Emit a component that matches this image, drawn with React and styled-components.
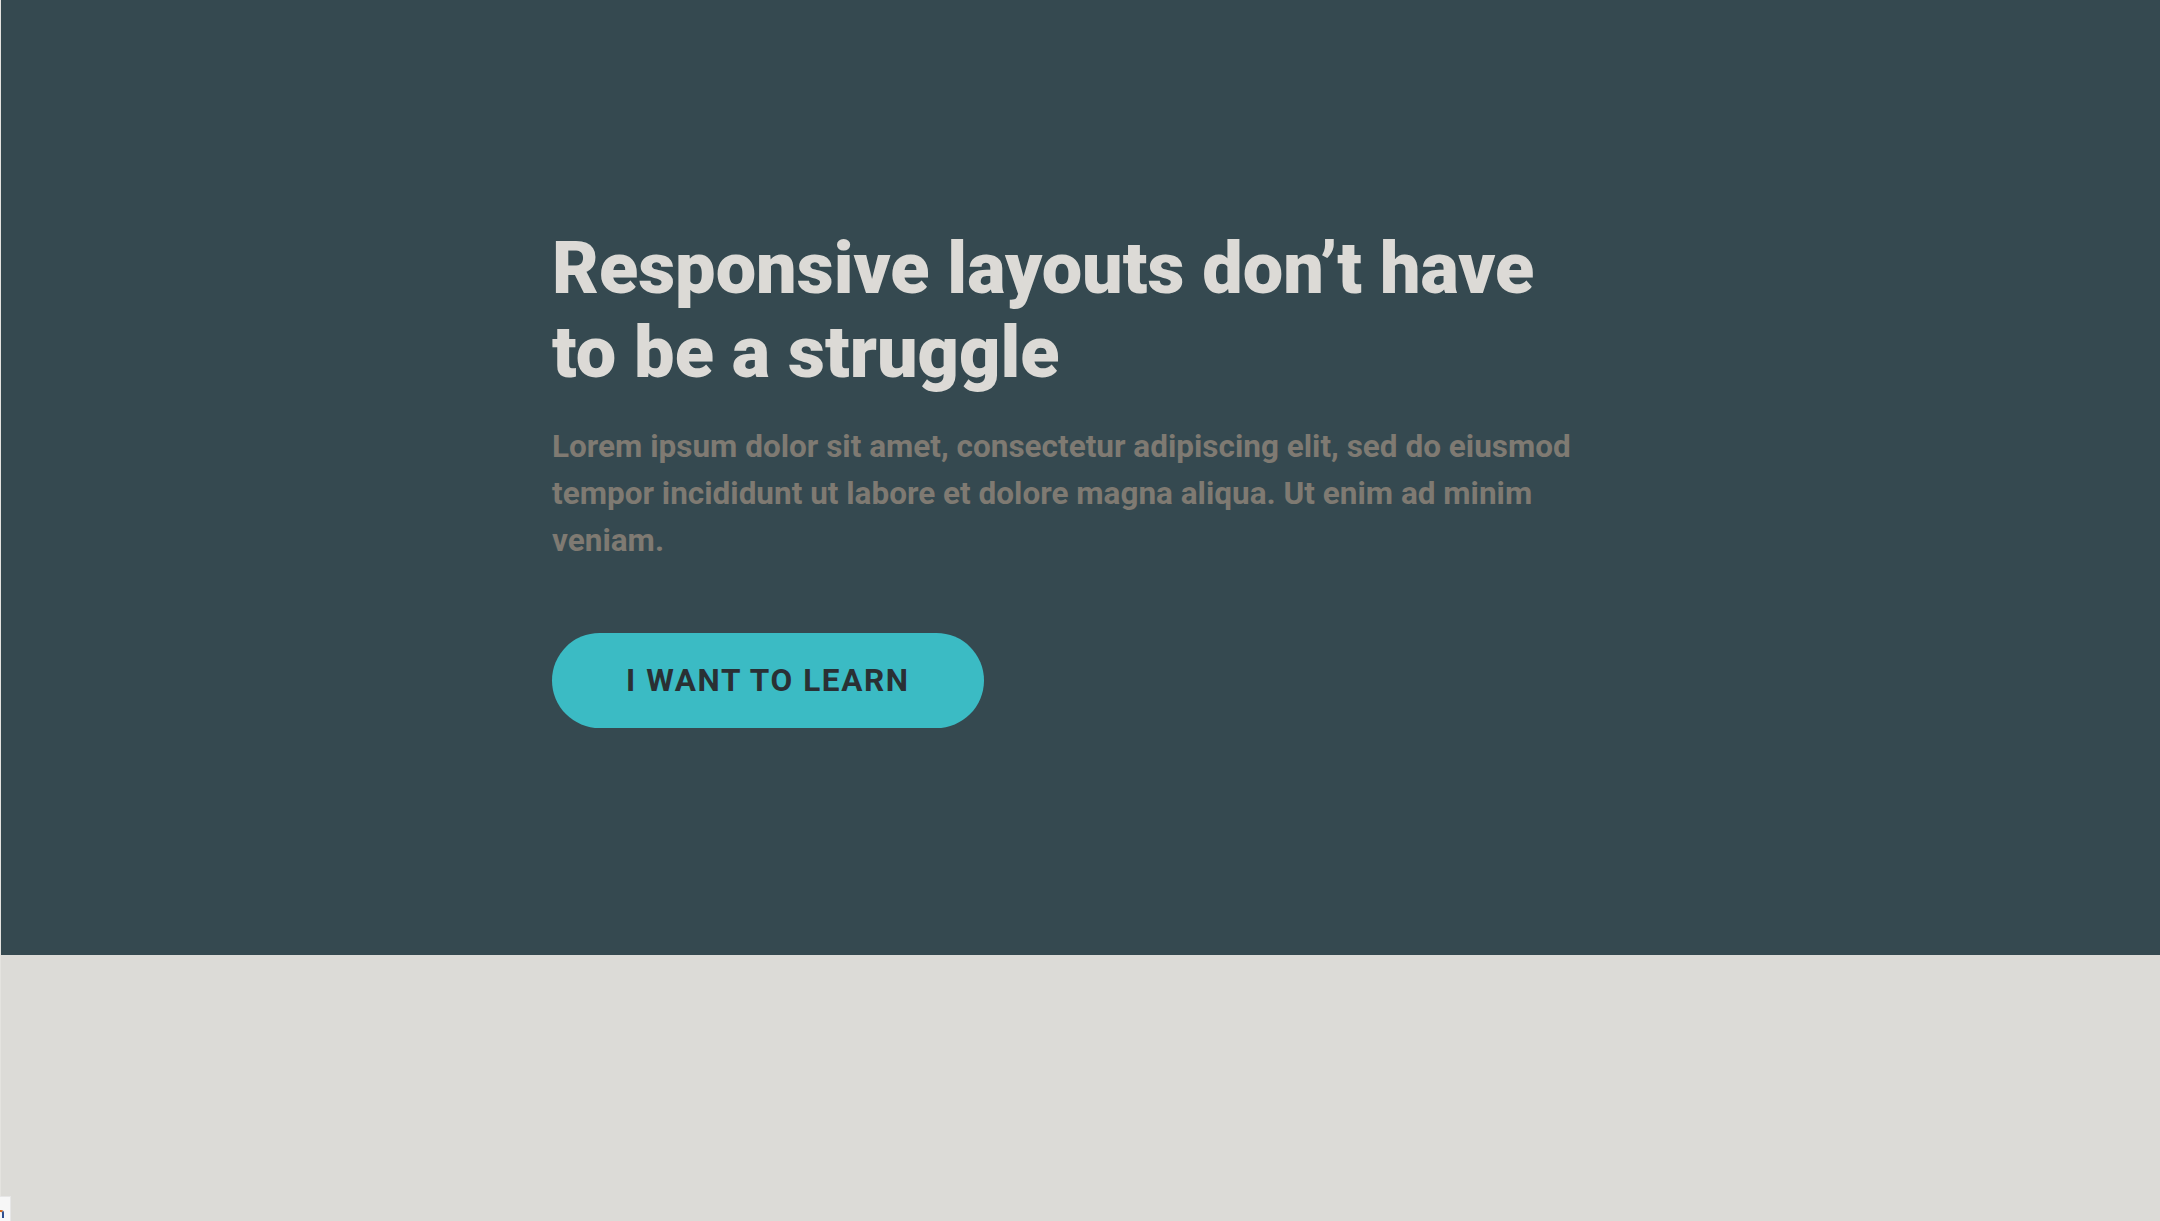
import styled, { createGlobalStyle } from "styled-components"

const GlobalStyle = createGlobalStyle`
    * {
        box-sizing: border-box;
    }
    body {
        margin: 0;
        background: #dcdbd7;
        font-family: Roboto, "Liberation Sans", sans-serif;
    }
`

export default function App() {
    return (
        <>
            <GlobalStyle />
            <Page>
                <Hero>
                    <Content>
                        <Title>Responsive layouts don’t have to be a struggle</Title>
                        <Lead>
                            Lorem ipsum dolor sit amet, consectetur adipiscing elit, sed do eiusmod tempor incididunt ut labore et dolore magna aliqua. Ut enim ad minim veniam.
                        </Lead>
                        <Button>I want to learn</Button>
                    </Content>
                </Hero>
                <Lower />
            </Page>
            <CornerTag><span /></CornerTag>
        </>
    )
}

const Page = styled.main`
    min-height: 1221px;
    display: flex;
    flex-direction: column;
    border-left: 1px solid #e4e3df;
`
const Hero = styled.section`
    height: 955px;
    background: #354950;
    display: flex;
    align-items: center;
    justify-content: center;
    padding-right: 1px;
`
const Content = styled.div`
    width: 1056px;
    display: flex;
    flex-direction: column;
    align-items: flex-start;
`
const Title = styled.h1`
    margin: 0 0 28px;
    font-size: 72px;
    line-height: 84px;
    font-weight: 900;
    color: #dcdad6;
`
const Lead = styled.p`
    margin: 0 0 69px;
    font-size: 31.5px;
    line-height: 47px;
    font-weight: 700;
    color: #7f7a72;
`
const Button = styled.button`
    height: 95px;
    padding: 0 74px;
    border: none;
    border-radius: 48px;
    background: #3bbbc4;
    color: #2a3034;
    font-family: inherit;
    font-size: 31.5px;
    font-weight: 700;
    letter-spacing: 1.6px;
    text-transform: uppercase;
    cursor: pointer;
`
const Lower = styled.section`
    flex: 1;
    background: #dcdbd7;
`
const CornerTag = styled.div`
    position: fixed;
    left: 0;
    bottom: 0;
    width: 11px;
    height: 25px;
    background: #f7f7f7;
    border-top: 1px solid #e6e6e6;
    border-right: 1px solid #e6e6e6;
    span {
        position: absolute;
        left: 0;
        top: 13px;
        width: 4px;
        height: 8px;
        border-top: 2px solid #d2691e;
        border-right: 2px solid #2f4f8f;
        border-top-right-radius: 3px;
    }
`
